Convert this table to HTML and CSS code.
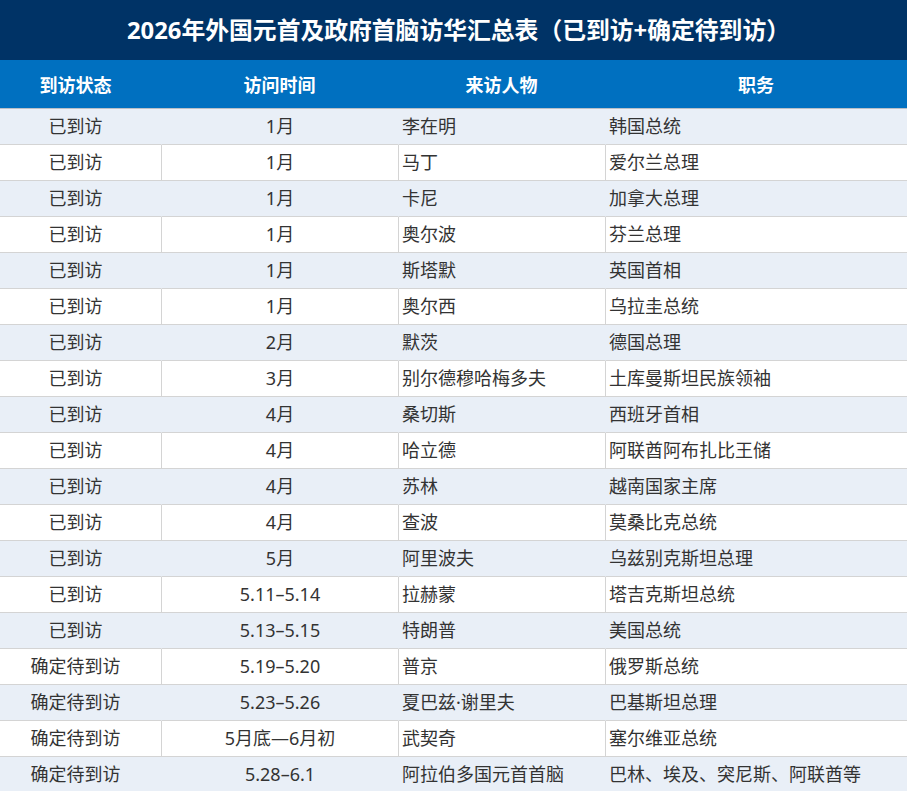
FILE: index.html
```html
<!DOCTYPE html>
<html lang="zh-CN">
<head>
<meta charset="utf-8">
<title>2026年外国元首及政府首脑访华汇总表</title>
<link rel="stylesheet" href="styles.css">
</head>
<body>
<div class="page">
  <h1 class="title">2026年外国元首及政府首脑访华汇总表（已到访+确定待到访）</h1>
  <table class="visits">
    <thead>
      <tr><th class="status c1">到访状态</th><th class="c2">访问时间</th><th class="c3">来访人物</th><th class="c4">职务</th></tr>
    </thead>
    <tbody>
      <tr><td class="status">已到访</td><td class="time">1月</td><td class="left">李在明</td><td class="left">韩国总统</td></tr>
      <tr><td class="status">已到访</td><td class="time">1月</td><td class="left">马丁</td><td class="left">爱尔兰总理</td></tr>
      <tr><td class="status">已到访</td><td class="time">1月</td><td class="left">卡尼</td><td class="left">加拿大总理</td></tr>
      <tr><td class="status">已到访</td><td class="time">1月</td><td class="left">奥尔波</td><td class="left">芬兰总理</td></tr>
      <tr><td class="status">已到访</td><td class="time">1月</td><td class="left">斯塔默</td><td class="left">英国首相</td></tr>
      <tr><td class="status">已到访</td><td class="time">1月</td><td class="left">奥尔西</td><td class="left">乌拉圭总统</td></tr>
      <tr><td class="status">已到访</td><td class="time">2月</td><td class="left">默茨</td><td class="left">德国总理</td></tr>
      <tr><td class="status">已到访</td><td class="time">3月</td><td class="left">别尔德穆哈梅多夫</td><td class="left">土库曼斯坦民族领袖</td></tr>
      <tr><td class="status">已到访</td><td class="time">4月</td><td class="left">桑切斯</td><td class="left">西班牙首相</td></tr>
      <tr><td class="status">已到访</td><td class="time">4月</td><td class="left">哈立德</td><td class="left">阿联酋阿布扎比王储</td></tr>
      <tr><td class="status">已到访</td><td class="time">4月</td><td class="left">苏林</td><td class="left">越南国家主席</td></tr>
      <tr><td class="status">已到访</td><td class="time">4月</td><td class="left">查波</td><td class="left">莫桑比克总统</td></tr>
      <tr><td class="status">已到访</td><td class="time">5月</td><td class="left">阿里波夫</td><td class="left">乌兹别克斯坦总理</td></tr>
      <tr><td class="status">已到访</td><td class="time">5.11–5.14</td><td class="left">拉赫蒙</td><td class="left">塔吉克斯坦总统</td></tr>
      <tr><td class="status">已到访</td><td class="time">5.13–5.15</td><td class="left">特朗普</td><td class="left">美国总统</td></tr>
      <tr><td class="status">确定待到访</td><td class="time">5.19–5.20</td><td class="left">普京</td><td class="left">俄罗斯总统</td></tr>
      <tr><td class="status">确定待到访</td><td class="time">5.23–5.26</td><td class="left">夏巴兹·谢里夫</td><td class="left">巴基斯坦总理</td></tr>
      <tr><td class="status">确定待到访</td><td class="time">5月底—6月初</td><td class="left">武契奇</td><td class="left">塞尔维亚总统</td></tr>
      <tr><td class="status">确定待到访</td><td class="time">5.28–6.1</td><td class="left">阿拉伯多国元首首脑</td><td class="left">巴林、埃及、突尼斯、阿联酋等</td></tr>
    </tbody>
  </table>
</div>
</body>
</html>
```

FILE: styles.css
```css
html, body {
  margin: 0;
  padding: 0;
  background: #ffffff;
}

body {
  font-family: "Noto Sans", "Noto Sans CJK SC", sans-serif;
  color: #333333;
}

.page {
  width: 907px;
}

.title {
  margin: 0;
  height: 60px;
  padding-left: 10px;
  background: #003366;
  color: #ffffff;
  font-size: 23.8px;
  font-weight: 700;
  line-height: 60px;
  text-align: center;
}

.visits {
  width: 907px;
  border-collapse: separate;
  border-spacing: 0;
  table-layout: fixed;
  font-size: 18px;
}

.visits th,
.visits td {
  box-sizing: border-box;
}

.c1 { width: 161px; }
.c2 { width: 237px; }
.c3 { width: 207px; }
.c4 { width: 302px; }

.visits th {
  height: 49px;
  padding: 0;
  background: #0070c0;
  color: #ffffff;
  font-weight: 700;
  font-size: 18px;
  text-align: center;
  border-bottom: 1px solid #b9bfc7;
}

.visits td {
  height: 36px;
  padding: 0;
  line-height: 35px;
  border-bottom: 1px solid #d4d4d4;
  border-left: 1px solid #d4d4d4;
  white-space: nowrap;
  overflow: hidden;
}

.visits td:first-child {
  border-left: none;
}

.visits tbody tr:nth-child(odd) td {
  background: #e9eff7;
  border-left-color: #e9eff7;
}

.visits .status {
  text-align: center;
  padding-right: 10px;
}

.visits .time {
  text-align: center;
}

.visits .left {
  text-align: left;
  padding-left: 3px;
}
```
